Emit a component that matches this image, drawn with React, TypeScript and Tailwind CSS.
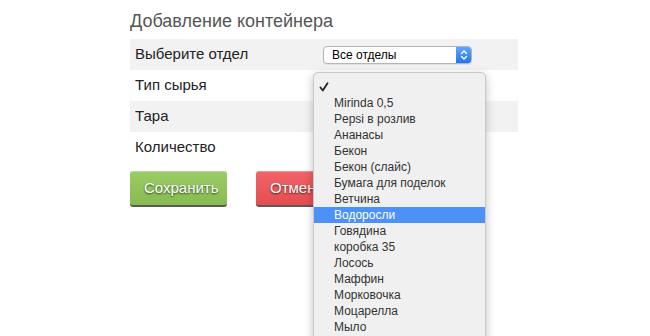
import React from "react";

const items = [
  "Mirinda 0,5",
  "Pepsi в розлив",
  "Ананасы",
  "Бекон",
  "Бекон (слайс)",
  "Бумага для поделок",
  "Ветчина",
  "Водоросли",
  "Говядина",
  "коробка 35",
  "Лосось",
  "Маффин",
  "Морковочка",
  "Моцарелла",
  "Мыло",
];

export default function App() {
  return (
    <div className="relative w-[650px] h-[336px] bg-white overflow-hidden font-['Liberation_Sans',Arial,sans-serif]">
      <div className="ml-[130px] w-[388px] pt-[10px]">
        <h1 className="text-[18px] leading-[22px] text-[#555] mb-[7px]">Добавление контейнера</h1>
        <div className="flex items-center h-[31px] bg-[#f2f2f2] pl-[5px]">
          <span className="w-[188px] text-[15px] text-[#222]">Выберите отдел</span>
          <div className="flex h-[18px] w-[149px] rounded-[4px] border border-[#b5b5b5] bg-white overflow-hidden shadow-[0_1px_1px_rgba(0,0,0,0.08)]">
            <span className="flex-1 pl-[8px] text-[12px] leading-[16px] text-black">Все отделы</span>
            <span className="w-[15px] flex items-center justify-center bg-gradient-to-b from-[#5fa5fb] to-[#1f74f0]">
              <svg width="8" height="12" viewBox="0 0 8 12" fill="none" stroke="white" strokeWidth="1.4" strokeLinecap="round" strokeLinejoin="round">
                <path d="M1.5 4.5 L4 2 L6.5 4.5" />
                <path d="M1.5 7.5 L4 10 L6.5 7.5" />
              </svg>
            </span>
          </div>
        </div>
        <div className="flex items-center h-[31px] bg-white pl-[5px]">
          <span className="text-[15px] text-[#222]">Тип сырья</span>
        </div>
        <div className="flex items-center h-[31px] bg-[#f2f2f2] pl-[5px]">
          <span className="text-[15px] text-[#222]">Тара</span>
        </div>
        <div className="flex items-center h-[31px] bg-white pl-[5px]">
          <span className="text-[15px] text-[#222]">Количество</span>
        </div>
        <div className="flex gap-[29px] mt-[8px]">
          <button className="w-[97px] h-[36px] px-[14px] text-left rounded-[3px] bg-gradient-to-b from-[#9bcc66] to-[#86bb50] border-b-[2px] border-[#5a5a5a] text-white text-[15px] [text-shadow:0_1px_2px_rgba(0,0,0,0.7)] shadow-[inset_0_1px_0_rgba(255,255,255,0.3)]">
            Сохранить
          </button>
          <button className="w-[97px] h-[36px] px-[14px] text-left rounded-[3px] bg-gradient-to-b from-[#f06468] to-[#e64c50] border-b-[2px] border-[#5a5a5a] text-white text-[15px] [text-shadow:0_1px_2px_rgba(0,0,0,0.7)] shadow-[inset_0_1px_0_rgba(255,255,255,0.3)]">
            Отмена
          </button>
        </div>
      </div>

      <div className="absolute left-[313px] top-[72px] w-[173px] h-[290px] bg-[#f0f0f0] border border-[#c8c8c8] rounded-t-[5px] shadow-[0_3px_10px_rgba(0,0,0,0.25)] pt-[6px]">
        <div className="flex items-center h-[16px] pl-[5px]">
          <svg width="10" height="10" viewBox="0 0 10 10" fill="none" stroke="#222" strokeWidth="1.8" strokeLinecap="round" strokeLinejoin="round">
            <path d="M1.5 5.5 L3.8 8.5 L8.5 1.2" />
          </svg>
        </div>
        {items.map((t) => (
          <div
            key={t}
            className={
              t === "Водоросли"
                ? "h-[16px] pl-[20px] text-[12px] leading-[16px] text-white bg-[#4c91f7]"
                : "h-[16px] pl-[20px] text-[12px] leading-[16px] text-[#333]"
            }
          >
            {t}
          </div>
        ))}
      </div>
    </div>
  );
}
